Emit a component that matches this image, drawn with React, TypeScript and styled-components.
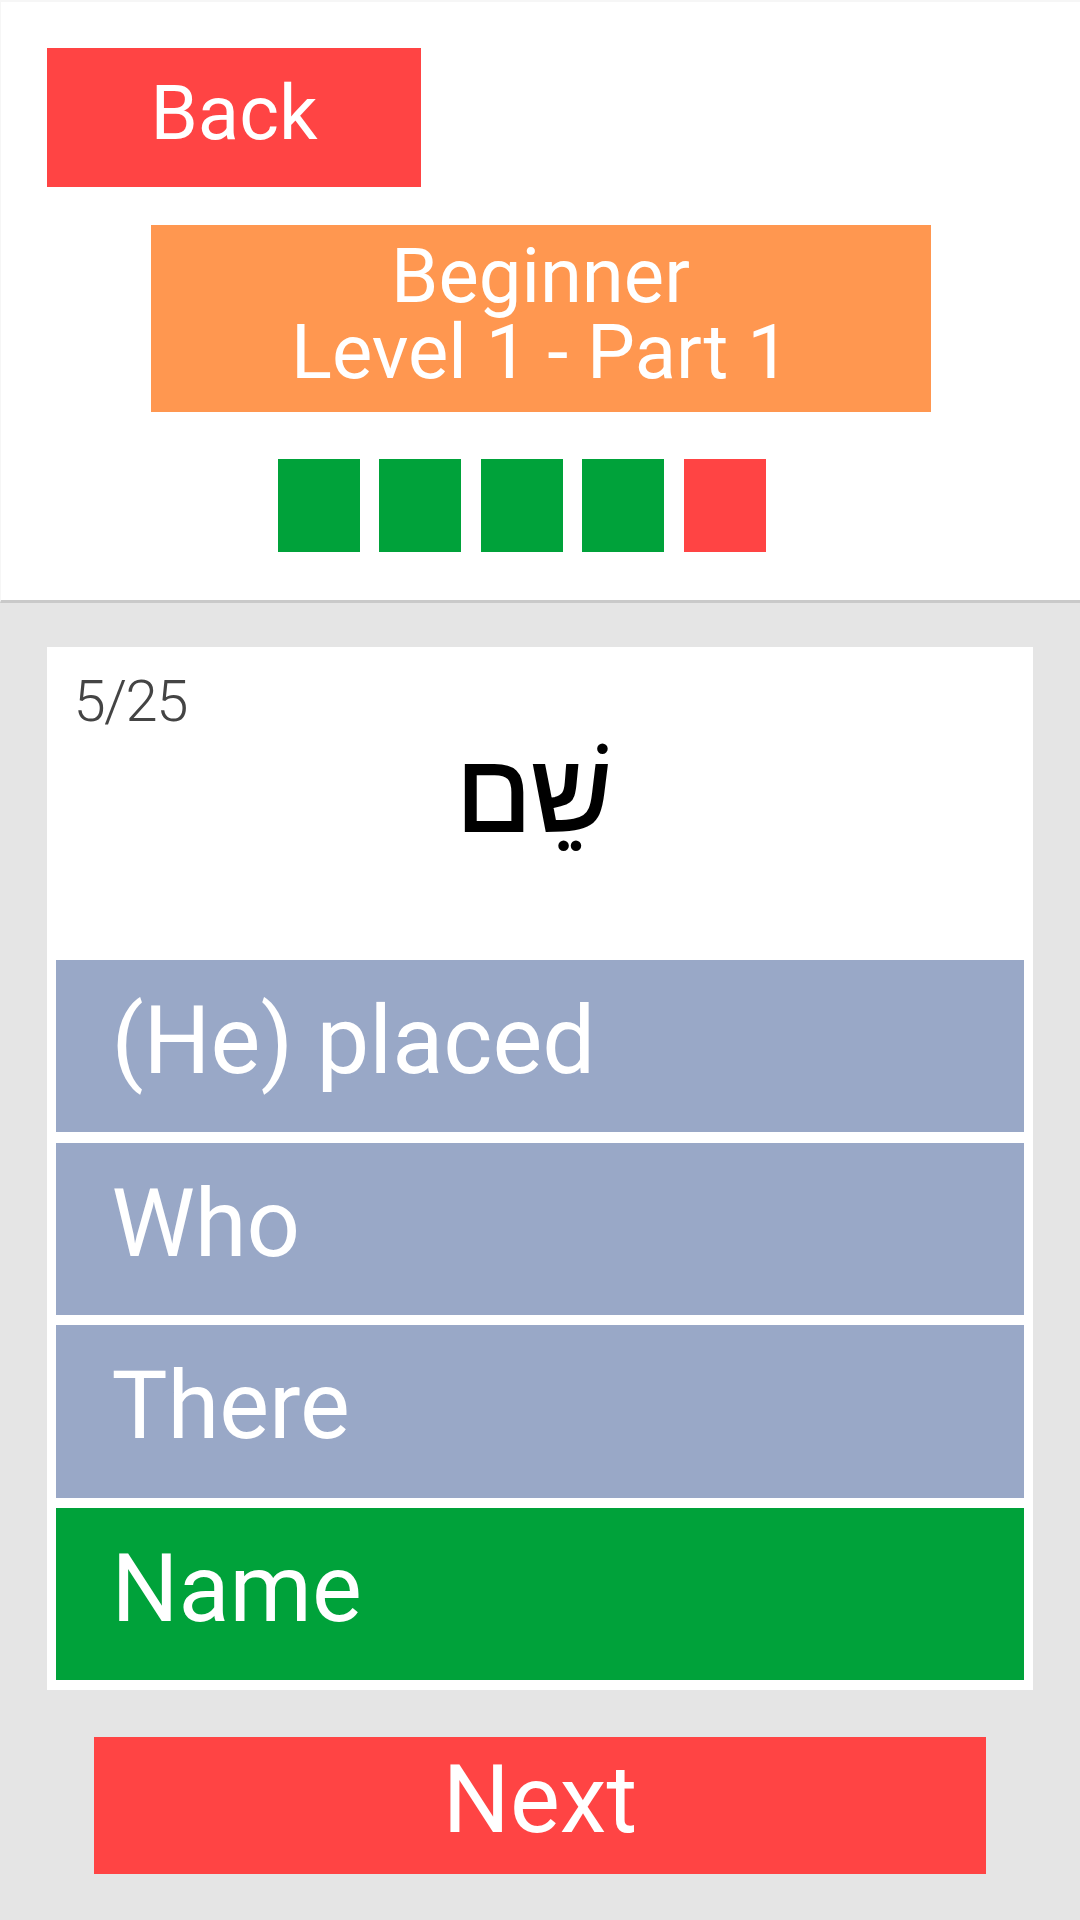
import React from "react";
import styled, { createGlobalStyle } from "styled-components";

const GlobalStyle = createGlobalStyle`
  *, *::before, *::after { box-sizing: border-box; }
  html, body { margin: 0; padding: 0; }
  body {
    background: #e5e5e5;
    font-family: Roboto, "Noto Sans", "Liberation Sans", sans-serif;
  }
`;

const Page = styled.div`
  width: 1080px;
  min-height: 1920px;
  background: #e5e5e5;
  display: flex;
  flex-direction: column;
`;

const Header = styled.header`
  height: 603px;
  background: #ffffff;
  border-top: 2px solid #f6f6f6;
  border-left: 1px solid #f6f6f6;
  border-bottom: 3px solid #c9c9c9;
  padding-top: 46px;
  display: flex;
  flex-direction: column;
`;

const BackButton = styled.button`
  margin-left: 46px;
  width: 374px;
  height: 139px;
  border: none;
  padding: 0 0 8px;
  background: #ff4444;
  color: #ffffff;
  font-family: Roboto, "Liberation Sans", sans-serif;
  font-size: 76px;
  line-height: 75px;
  display: flex;
  align-items: center;
  justify-content: center;
`;

const LevelBanner = styled.div`
  margin: 38px auto 0;
  width: 780px;
  height: 187px;
  padding-bottom: 9px;
  background: #ff9750;
  color: #ffffff;
  font-size: 76px;
  line-height: 76px;
  text-align: center;
  display: flex;
  flex-direction: column;
  align-items: center;
  justify-content: center;
`;

const BannerLine = styled.span`
  display: block;
`;

const Progress = styled.div`
  margin-top: 47px;
  padding-right: 38px;
  display: flex;
  justify-content: center;
  gap: 19.5px;
`;

const ProgressCell = styled.div<{ $ok: boolean }>`
  width: 82px;
  height: 93px;
  background: ${(p) => (p.$ok ? "#00a23a" : "#ff4444")};
`;

const Main = styled.main`
  padding: 44px 47px 0;
  display: flex;
  flex-direction: column;
`;

const Card = styled.section`
  background: #ffffff;
  padding: 9.4px;
  display: flex;
  flex-direction: column;
`;

const QuestionArea = styled.div`
  height: 303.6px;
  display: flex;
  flex-direction: column;
`;

const Counter = styled.div`
  margin: 15.6px 0 0 17px;
  font-size: 58px;
  line-height: 58px;
  font-weight: 300;
  letter-spacing: -1.5px;
  color: #444444;
`;

const HebrewWord = styled.div`
  margin-top: 8px;
  text-align: center;
  font-family: "Liberation Sans", "DejaVu Sans", sans-serif;
  font-size: 110px;
  line-height: 110px;
  color: #000000;
  -webkit-text-stroke: 2px #000000;
  padding-right: 12px;
`;

const Options = styled.div`
  display: flex;
  flex-direction: column;
  gap: 10.33px;
`;

const Option = styled.div<{ $correct?: boolean }>`
  height: 172.33px;
  padding: 0 0 10px 55px;
  background: ${(p) => (p.$correct ? "#00a23a" : "#99a8c7")};
  color: #ffffff;
  font-size: 94px;
  display: flex;
  align-items: center;
`;

const NextButton = styled.button`
  margin: 47px auto 0;
  width: 892px;
  height: 137px;
  border: none;
  padding: 0 0 10px;
  background: #ff4444;
  color: #ffffff;
  font-family: Roboto, "Liberation Sans", sans-serif;
  font-size: 94px;
  display: flex;
  align-items: center;
  justify-content: center;
`;

const progress = [true, true, true, true, false];
const answers = [
  { text: "(He) placed", correct: false },
  { text: "Who", correct: false },
  { text: "There", correct: false },
  { text: "Name", correct: true },
];

export default function App() {
  return (
    <Page>
      <GlobalStyle />
      <Header>
        <BackButton>Back</BackButton>
        <LevelBanner>
          <BannerLine>Beginner</BannerLine>
          <BannerLine>Level 1 - Part 1</BannerLine>
        </LevelBanner>
        <Progress>
          {progress.map((ok, i) => (
            <ProgressCell key={i} $ok={ok} />
          ))}
        </Progress>
      </Header>
      <Main>
        <Card>
          <QuestionArea>
            <Counter>5/25</Counter>
            <HebrewWord lang="he" dir="rtl">שֵׁם</HebrewWord>
          </QuestionArea>
          <Options>
            {answers.map((a) => (
              <Option key={a.text} $correct={a.correct}>
                {a.text}
              </Option>
            ))}
          </Options>
        </Card>
        <NextButton>Next</NextButton>
      </Main>
    </Page>
  );
}
